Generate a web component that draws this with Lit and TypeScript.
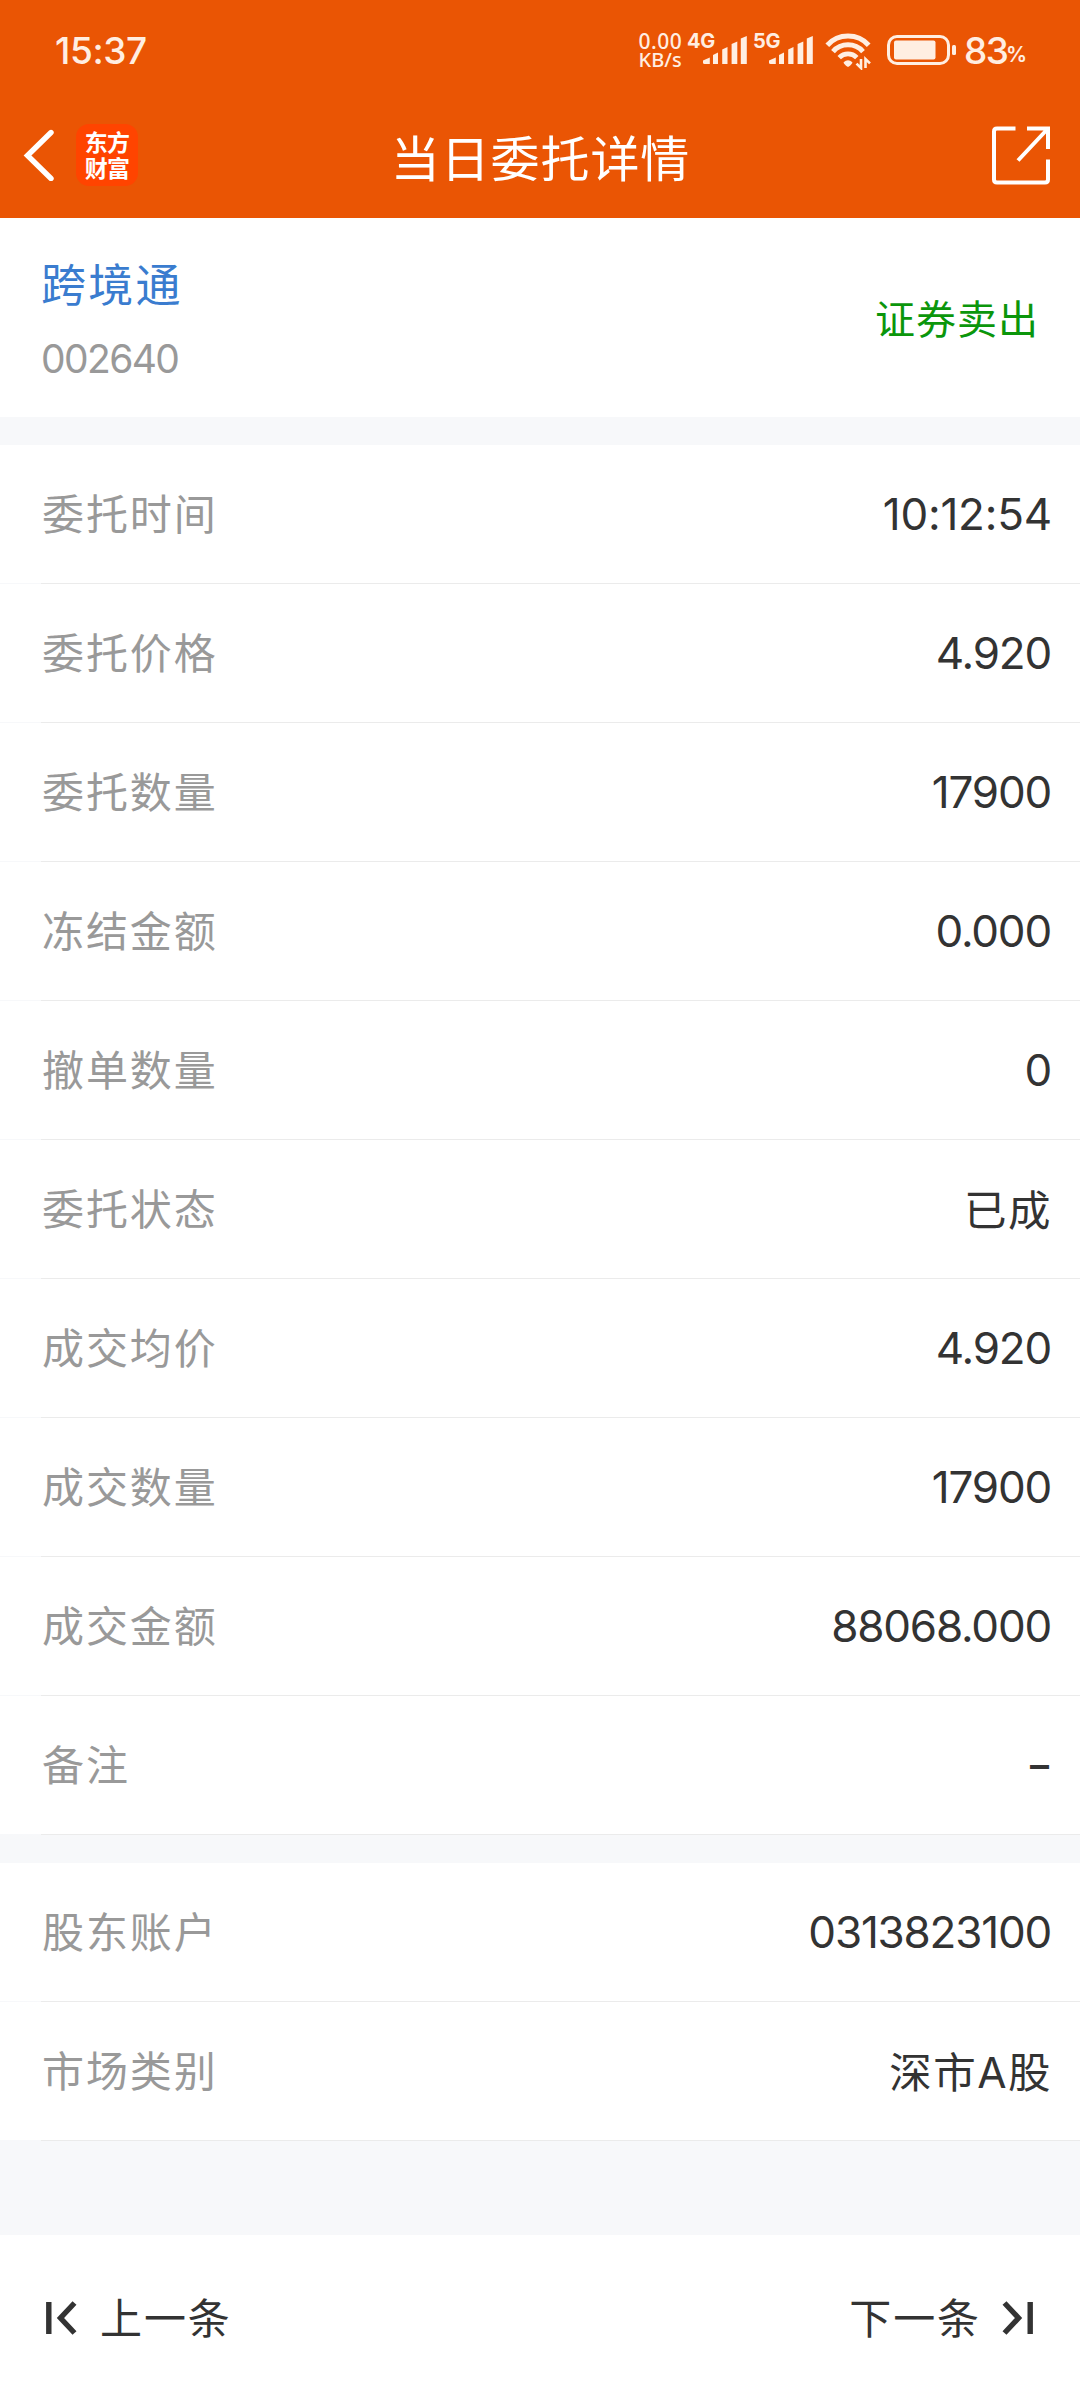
import { LitElement, html, css, svg } from "lit";
import { customElement, property } from "lit/decorators.js";

type Field = { label: string; value: string; kind?: "num" | "id" | "cjk" | "dash" | "clock" };

const ORDER: Field[] = [
  { label: "委托时间", value: "10:12:54", kind: "clock" },
  { label: "委托价格", value: "4.920" },
  { label: "委托数量", value: "17900" },
  { label: "冻结金额", value: "0.000" },
  { label: "撤单数量", value: "0" },
  { label: "委托状态", value: "已成", kind: "cjk" },
  { label: "成交均价", value: "4.920" },
  { label: "成交数量", value: "17900" },
  { label: "成交金额", value: "88068.000" },
  { label: "备注", value: "–", kind: "dash" },
];

const ACCOUNT: Field[] = [
  { label: "股东账户", value: "0313823100", kind: "id" },
  { label: "市场类别", value: "深市A股", kind: "cjk" },
];

@customElement("signal-meter")
class SignalMeter extends LitElement {
  @property() network = "";

  static styles = css`
    :host {
      display: grid;
      width: 60px;
      height: 32px;
    }
    .network,
    .bars {
      grid-area: 1 / 1;
    }
    .network {
      font: 700 20px/20px Inter, sans-serif;
      letter-spacing: -0.2px;
      margin-top: -1px;
    }
    .bars {
      justify-self: end;
      align-self: end;
      display: block;
    }
  `;

  render() {
    return html`
      <span class="network">${this.network}</span>
      <svg class="bars" width="44" height="28" viewBox="0 0 44 28" fill="currentColor">
        ${svg`
          <path d="M0 24.5 6.8 21.5V28H1.5Q0 28 0 26.5Z" />
          <path d="M10 19 15 16.5V28H10Z" />
          <path d="M19.2 13.5 24.5 11V28H19.2Z" />
          <path d="M28.6 8 34.3 5.5V28H28.6Z" />
          <path d="M37.8 2.5 43.8 0V28H37.8Z" />
        `}
      </svg>
    `;
  }
}

@customElement("status-bar")
class StatusBar extends LitElement {
  static styles = css`
    :host {
      display: flex;
      align-items: flex-start;
      height: 68px;
      padding: 32px 55px 0 55px;
      box-sizing: border-box;
      color: #ffeee2;
      font-family: Inter, sans-serif;
    }
    .clock {
      font-size: 37px;
      font-weight: 500;
      line-height: 38px;
      letter-spacing: -0.4px;
      flex: 1;
    }
    .speed {
      display: flex;
      flex-direction: column;
      width: 48.5px;
      font: 500 20px/18.5px "Noto Sans", sans-serif;
    }
    .rate {
      font-size: 21px;
      letter-spacing: 0.5px;
    }
    .second {
      margin-left: 6px;
    }
    .wifi {
      margin-left: 12px;
    }
    .battery {
      margin: 2px 0 0 14px;
    }
    .level {
      margin-left: 7px;
      font-size: 37px;
      font-weight: 500;
      line-height: 38px;
      width: 42px;
      letter-spacing: -1.5px;
    }
    .unit {
      width: 19px;
      font-size: 21px;
      font-weight: 600;
      line-height: 46px;
      letter-spacing: -1px;
    }
  `;

  render() {
    return html`
      <span class="clock">15:37</span>
      <span class="speed"><span class="rate">0.00</span><span>KB/s</span></span>
      <signal-meter network="4G"></signal-meter>
      <signal-meter class="second" network="5G"></signal-meter>
      <svg class="wifi" width="48" height="38" viewBox="0 0 48 38" fill="none" stroke="currentColor">
        <path d="M2.3 13.2A28 28 0 0 1 43.7 13.2" stroke-width="5" />
        <path d="M8 19.6A20 20 0 0 1 38 19.6" stroke-width="5" />
        <path d="M14.2 25.6A12.4 12.4 0 0 1 31.8 25.6" stroke-width="4.8" />
        <path d="M18.6 30.2Q23 26.2 27.4 30.2Q27.6 32 23 35Q18.4 32 18.6 30.2Z" fill="currentColor" stroke="none" />
        <path d="M36 27V36L31.5 31.6M40.5 36V27L45 31.4" stroke-width="2.6" />
      </svg>
      <svg class="battery" width="70" height="32" viewBox="0 0 70 32" fill="currentColor">
        <rect x="1.5" y="2.5" width="60" height="27" rx="8.5" fill="none" stroke="currentColor" stroke-width="3" />
        <rect x="7" y="6.5" width="41.5" height="19" rx="2" />
        <rect x="65" y="11" width="4" height="10" rx="1.5" />
      </svg>
      <span class="level">83</span>
      <span class="unit">%</span>
    `;
  }
}

@customElement("title-bar")
class TitleBar extends LitElement {
  static styles = css`
    :host {
      display: grid;
      grid-template-columns: 1fr auto 1fr;
      align-items: center;
      height: 150px;
      padding: 24px 28px 0 22px;
      box-sizing: border-box;
      color: #fff;
    }
    .left {
      display: flex;
      align-items: center;
    }
    .logo {
      display: grid;
      align-content: center;
      width: 62px;
      height: 62px;
      box-sizing: border-box;
      padding-bottom: 3px;
      margin-left: 22px;
      border-radius: 13px;
      background: #ff4400;
      text-align: center;
      font: 700 23px/26px "Noto Sans CJK SC", sans-serif;
      letter-spacing: -0.8px;
    }
    .title {
      margin: 0;
      font: 400 49px/60px "Noto Sans CJK SC", sans-serif;
      letter-spacing: 0.9px;
      padding: 1px 0 0 7px;
    }
    .share {
      justify-self: end;
    }
  `;

  render() {
    return html`
      <div class="left">
        <svg width="32" height="52" viewBox="0 0 32 52" fill="none" stroke="currentColor" stroke-width="5.4">
          <path d="M29 3.5 5.5 26.5 29 49.5" stroke-linecap="round" />
        </svg>
        <div class="logo"><span>东方</span><span>财富</span></div>
      </div>
      <h1 class="title">当日委托详情</h1>
      <svg class="share" width="60" height="60" viewBox="0 0 60 60" fill="none" stroke="currentColor" stroke-width="4">
        <path d="M23.5 3.5H5Q2 3.5 2 6.5V54.5Q2 57.5 5 57.5H53Q56 57.5 56 54.5V34.5" />
        <path d="M35 3.5H56V24M56 3.5 26 35.5" />
      </svg>
    `;
  }
}

@customElement("field-row")
class FieldRow extends LitElement {
  @property({ attribute: false }) field!: Field;

  static styles = css`
    :host {
      display: block;
      height: 139px;
      background: linear-gradient(#f7f8fa, #f7f8fa) left bottom / 41px 1px no-repeat #fff;
    }
    .row {
      display: flex;
      align-items: center;
      justify-content: space-between;
      height: 139px;
      box-sizing: border-box;
      margin-left: 41px;
      padding: 0 29px 0 1px;
      border-bottom: 1px solid #ebebeb;
    }
    .label {
      font: 400 42px/60px "Noto Sans CJK SC", sans-serif;
      letter-spacing: 1.9px;
      color: #999;
      padding-bottom: 4px;
    }
    .value {
      font: 400 44px/60px Inter, "Noto Sans CJK SC", sans-serif;
      color: #333;
      letter-spacing: -1.2px;
    }
    .clock {
      letter-spacing: -0.2px;
      margin-right: -1px;
    }
    .dash {
      font-size: 38px;
      font-weight: 600;
      letter-spacing: 0;
      margin-right: 2px;
    }
    .cjk {
      font: 400 42.5px/60px Inter, "Noto Sans CJK SC", sans-serif;
      letter-spacing: 1.5px;
      padding-top: 3px;
      margin-right: -1px;
    }
  `;

  render() {
    const { label, value, kind } = this.field;
    return html`
      <div class="row">
        <span class="label">${label}</span>
        <span class="value ${kind ?? "num"}">${value}</span>
      </div>
    `;
  }
}

@customElement("app-root")
class AppRoot extends LitElement {
  static styles = css`
    :host {
      display: flex;
      flex-direction: column;
      width: 1080px;
      height: 2400px;
      background: #f7f8fa;
      overflow: hidden;
    }
    .top {
      background: #ea5504;
    }
    .stock {
      display: flex;
      align-items: center;
      justify-content: space-between;
      height: 199px;
      box-sizing: border-box;
      padding: 2px 41px 0 41px;
      background: #fff;
      margin-bottom: 28px;
    }
    .name {
      font: 400 45px/60px "Noto Sans CJK SC", sans-serif;
      letter-spacing: 2.2px;
      color: #3a7ccf;
    }
    .code {
      font: 400 39px/50px Inter, sans-serif;
      letter-spacing: -1.6px;
      color: #999;
      margin-top: 21px;
    }
    .side {
      font: 400 40px/60px "Noto Sans CJK SC", sans-serif;
      letter-spacing: 1px;
      color: #0b960b;
      padding-bottom: 4px;
    }
    .group + .group {
      margin-top: 28px;
    }
    .pager {
      display: flex;
      align-items: center;
      justify-content: space-between;
      margin-top: auto;
      height: 165px;
      padding: 0 47px 0 46px;
      background: #fff;
      color: #333;
      font: 400 42px/60px "Noto Sans CJK SC", sans-serif;
      letter-spacing: 1.9px;
    }
    .step {
      display: flex;
      align-items: center;
      gap: 23px;
    }
    .step > span {
      padding-bottom: 3px;
    }
    .next {
      gap: 21px;
    }
  `;

  render() {
    return html`
      <header class="top">
        <status-bar></status-bar>
        <title-bar></title-bar>
      </header>
      <section class="stock">
        <div>
          <div class="name">跨境通</div>
          <div class="code">002640</div>
        </div>
        <span class="side">证券卖出</span>
      </section>
      <section class="group">${ORDER.map((f) => html`<field-row .field=${f}></field-row>`)}</section>
      <section class="group">${ACCOUNT.map((f) => html`<field-row .field=${f}></field-row>`)}</section>
      <nav class="pager">
        <div class="step">
          <svg width="31" height="36" viewBox="0 0 31 36" fill="none" stroke="currentColor" stroke-width="5.4">
            <path d="M2.8 2V34M28.5 3 14.5 18 28.5 33" />
          </svg>
          <span>上一条</span>
        </div>
        <div class="step next">
          <span>下一条</span>
          <svg width="31" height="36" viewBox="0 0 31 36" fill="none" stroke="currentColor" stroke-width="5.4">
            <path d="M28.2 2V34M2.5 3 16.5 18 2.5 33" />
          </svg>
        </div>
      </nav>
    `;
  }
}
